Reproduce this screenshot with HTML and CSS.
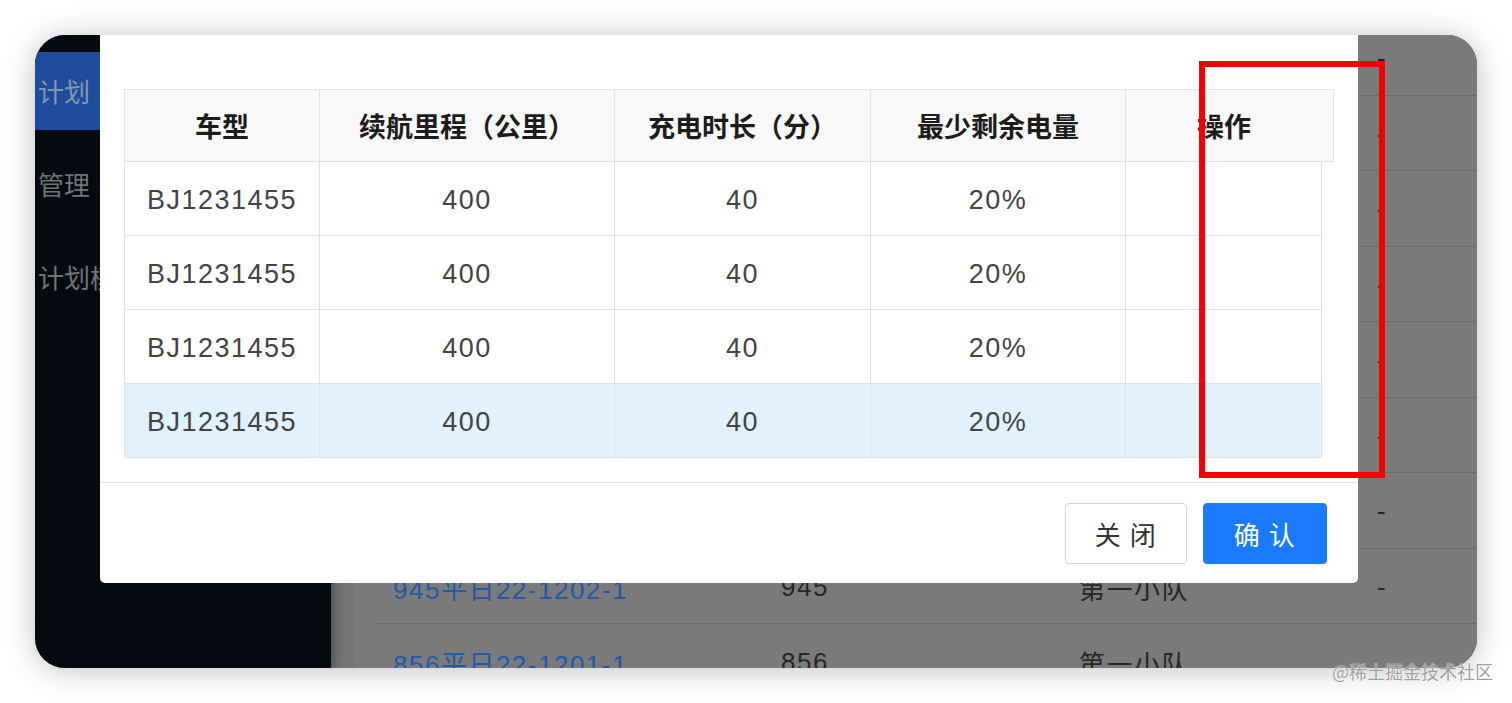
FILE: index.html
```html
<!DOCTYPE html>
<html lang="zh-CN">
<head>
<meta charset="utf-8">
<title>车型选择</title>
<link rel="stylesheet" href="styles.css">
</head>
<body>
<div class="frame">
  <aside class="sider">
    <ul class="menu">
      <li class="menu-item is-selected">计划</li>
      <li class="menu-item">管理</li>
      <li class="menu-item">计划模板</li>
    </ul>
  </aside>
  <main class="content">
    <div class="card">
      <div class="rows">
        <div class="row"><span></span><span></span><span></span><span>-</span></div>
        <div class="row"><span></span><span></span><span></span><span>-</span></div>
        <div class="row"><span></span><span></span><span></span><span>-</span></div>
        <div class="row"><span></span><span></span><span></span><span>-</span></div>
        <div class="row"><span></span><span></span><span></span><span>-</span></div>
        <div class="row"><span></span><span></span><span></span><span>-</span></div>
        <div class="row"><span></span><span></span><span></span><span>-</span></div>
        <div class="row"><span class="link">945平日22-1202-1</span><span>945</span><span>第一小队</span><span>-</span></div>
        <div class="row"><span class="link">856平日22-1201-1</span><span>856</span><span>第一小队</span><span></span></div>
      </div>
    </div>
  </main>

  <div class="modal">
    <div class="modal-body">
      <div class="table">
        <table class="thead-table">
          <colgroup>
            <col class="c1"><col class="c2"><col class="c3"><col class="c4"><col class="c5"><col class="cg">
          </colgroup>
          <thead>
            <tr>
              <th>车型</th>
              <th>续航里程（公里）</th>
              <th>充电时长（分）</th>
              <th>最少剩余电量</th>
              <th class="th-last">操作</th>
              <th class="gutter"></th>
            </tr>
          </thead>
        </table>
        <table class="tbody-table">
          <colgroup>
            <col class="c1"><col class="c2"><col class="c3"><col class="c4"><col class="c5">
          </colgroup>
          <tbody>
            <tr><td>BJ1231455</td><td>400</td><td>40</td><td>20%</td><td></td></tr>
            <tr><td>BJ1231455</td><td>400</td><td>40</td><td>20%</td><td></td></tr>
            <tr><td>BJ1231455</td><td>400</td><td>40</td><td>20%</td><td></td></tr>
            <tr class="is-hover"><td>BJ1231455</td><td>400</td><td>40</td><td>20%</td><td></td></tr>
          </tbody>
        </table>
      </div>
    </div>
    <div class="modal-footer">
      <button class="btn">关 闭</button>
      <button class="btn btn-primary">确 认</button>
    </div>
  </div>

  <div class="annot"></div>
</div>
<div class="watermark">@稀土掘金技术社区</div>
</body>
</html>
```

FILE: styles.css
```css
* { box-sizing: border-box; }

html, body {
  margin: 0;
  padding: 0;
  background: #ffffff;
}

body {
  position: relative;
  width: 1512px;
  height: 703px;
  padding: 35px 35px 0 35px;
  font-family: "Liberation Sans", "Noto Sans CJK SC", sans-serif;
  overflow: hidden;
}

.frame {
  position: relative;
  display: flex;
  width: 1442px;
  height: 633px;
  border-radius: 30px;
  overflow: hidden;
  box-shadow: 0 2px 30px rgba(0, 0, 0, 0.25);
  background: #737475;
}

/* ---------- sidebar ---------- */
.sider {
  position: relative;
  z-index: 1;
  flex: 0 0 296px;
  background: #050a10;
  padding-top: 17px;
  box-shadow: 3px 0 10px rgba(0, 0, 0, 0.35);
}

.menu {
  list-style: none;
  margin: 0;
  padding: 0;
  display: flex;
  flex-direction: column;
  gap: 15px;
}

.menu-item {
  height: 78px;
  line-height: 78px;
  padding-left: 3px;
  font-family: "Noto Sans CJK SC", sans-serif;
  font-size: 26px;
  color: #717478;
  white-space: nowrap;
  overflow: hidden;
}

.menu-item.is-selected {
  background: #1d4c9c;
  color: #8797b3;
}

/* ---------- page content ---------- */
.content {
  flex: 1;
  padding-left: 23px;
  background: #737475;
}

.card {
  display: flex;
  flex-direction: column;
  height: 100%;
  padding-left: 24px;
  background: #7a7a7a;
}

.rows {
  margin-top: -15px;
}

.row {
  display: grid;
  grid-template-columns: 388px 298px 298px 1fr;
  align-items: center;
  height: 75.5px;
  padding-top: 3px;
  border-bottom: 1px solid #6a6a6a;
  font-size: 26px;
  letter-spacing: 1.5px;
  color: #262626;
  white-space: nowrap;
}

.row > span {
  padding-left: 15px;
}

.row .link {
  color: #2258a8;
}

/* ---------- modal ---------- */
.modal {
  position: absolute;
  z-index: 5;
  left: 65px;
  top: 0;
  width: 1258px;
  height: 548px;
  background: #ffffff;
  border-radius: 0 0 5px 5px;
}

.modal-body {
  padding: 54px 24px 24px 24px;
}

.table {
  border-left: 1px solid #e2e2e2;
  width: max-content;
}

.thead-table,
.tbody-table {
  border-collapse: separate;
  border-spacing: 0;
  table-layout: fixed;
}

.thead-table {
  width: 1209px;
  border-top: 1px solid #e2e2e2;
}

.tbody-table {
  width: 1197px;
}

col.c1 { width: 195px; }
col.c2 { width: 295px; }
col.c3 { width: 256px; }
col.c4 { width: 255px; }
col.c5 { width: 196px; }
col.cg { width: 12px; }

th, td {
  padding: 0;
  text-align: center;
  border-right: 1px solid #e2e2e2;
  border-bottom: 1px solid #e2e2e2;
}

th {
  height: 72px;
  line-height: 71px;
  background: #f8f8f8;
  font-family: "Noto Sans CJK SC", sans-serif;
  font-weight: 700;
  font-size: 27px;
  color: #1c1c1c;
}

th.th-last {
  border-right: none;
}

td {
  height: 74px;
  padding-top: 4px;
  line-height: 69px;
  background: #ffffff;
  font-size: 27px;
  letter-spacing: 1.5px;
  color: #434343;
}

tr.is-hover td {
  background: #e1f2fd;
}

.modal-footer {
  display: flex;
  justify-content: flex-end;
  gap: 16px;
  padding: 20px 31px 19px 0;
  border-top: 1px solid #e2e2e2;
}

.btn {
  height: 61px;
  width: 122px;
  padding: 0;
  border: 1px solid #d6d6d6;
  border-radius: 4px;
  background: #ffffff;
  font-family: "Noto Sans CJK SC", sans-serif;
  font-size: 26px;
  letter-spacing: 1.5px;
  color: #333333;
  box-shadow: 0 2px 0 rgba(0, 0, 0, 0.02);
}

.btn-primary {
  width: 124px;
  border-color: #1a7bff;
  background: #1a7bff;
  color: #ffffff;
  box-shadow: 0 2px 0 rgba(0, 0, 0, 0.045);
}

/* ---------- annotation ---------- */
.annot {
  position: absolute;
  z-index: 10;
  left: 1164px;
  top: 26px;
  width: 186px;
  height: 417px;
  border: 6px solid #f50000;
}

.watermark {
  position: absolute;
  left: 1332px;
  top: 661px;
  font-family: "Noto Sans CJK SC", sans-serif;
  font-size: 18px;
  line-height: 20px;
  color: rgba(140, 140, 140, 0.85);
  text-shadow: 0 0 1px rgba(255, 255, 255, 0.9), 0 0 2px rgba(255, 255, 255, 0.6);
  white-space: nowrap;
}
```
